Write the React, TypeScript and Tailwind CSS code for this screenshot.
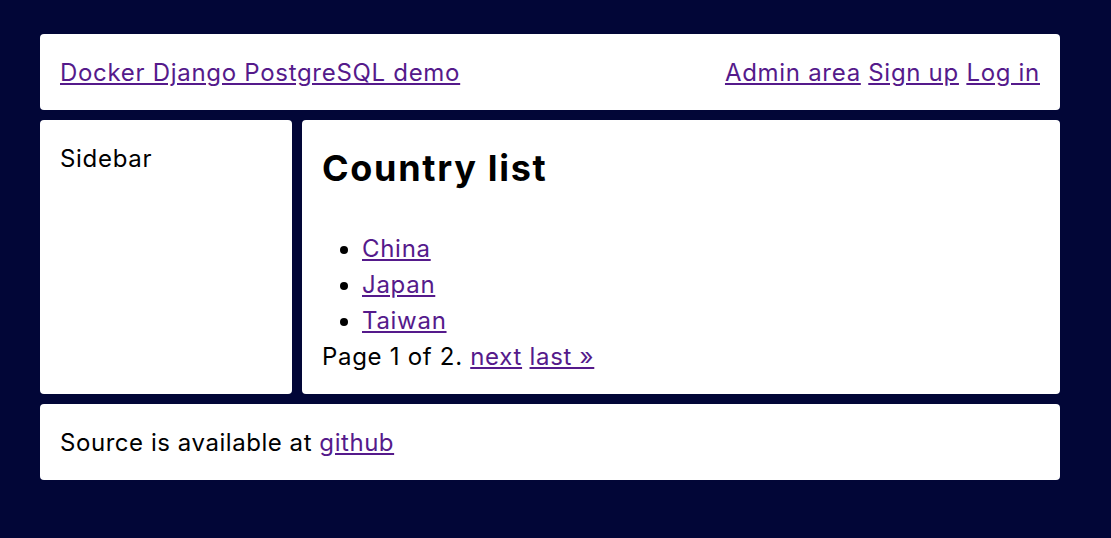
export default function App() {
  const font = { fontFamily: 'Inter, "Noto Sans", "Noto Sans CJK JP", sans-serif' };
  return (
    <div className="min-h-[538px] w-[1111px] bg-[#020637] pt-[34px] pl-[40px]" style={font}>
      <div className="flex w-[1020px] flex-col gap-[10px] text-[24px] leading-[36px] tracking-[0.7px] text-black">
        <header className="flex items-center justify-between rounded-[4px] bg-white px-[20px] pt-[21px] pb-[19px]">
          <a href="#" className="text-[#551a8b] underline">Docker Django PostgreSQL demo</a>
          <nav>
            <a href="#" className="text-[#551a8b] underline">Admin area</a>{" "}
            <a href="#" className="text-[#551a8b] underline">Sign up</a>{" "}
            <a href="#" className="text-[#551a8b] underline">Log in</a>
          </nav>
        </header>
        <div className="grid grid-cols-[252px_1fr] gap-[10px]">
          <aside className="rounded-[4px] bg-white px-[20px] pt-[21px] pb-[19px]">Sidebar</aside>
          <main className="rounded-[4px] bg-white px-[20px] pt-[21px] pb-[19px]">
            <h1 className="text-[36px] font-bold leading-[54px] tracking-[1.7px]">Country list</h1>
            <ul className="mt-[36px] list-disc pl-[40px]">
              <li><a href="#" className="text-[#551a8b] underline">China</a></li>
              <li><a href="#" className="text-[#551a8b] underline">Japan</a></li>
              <li><a href="#" className="text-[#551a8b] underline">Taiwan</a></li>
            </ul>
            <div>
              Page 1 of 2.{" "}
              <a href="#" className="text-[#551a8b] underline">next</a>{" "}
              <a href="#" className="text-[#551a8b] underline">last »</a>
            </div>
          </main>
        </div>
        <footer className="rounded-[4px] bg-white px-[20px] pt-[21px] pb-[19px] tracking-[0.55px]">
          Source is available at <a href="#" className="text-[#551a8b] underline">github</a>
        </footer>
      </div>
    </div>
  );
}
